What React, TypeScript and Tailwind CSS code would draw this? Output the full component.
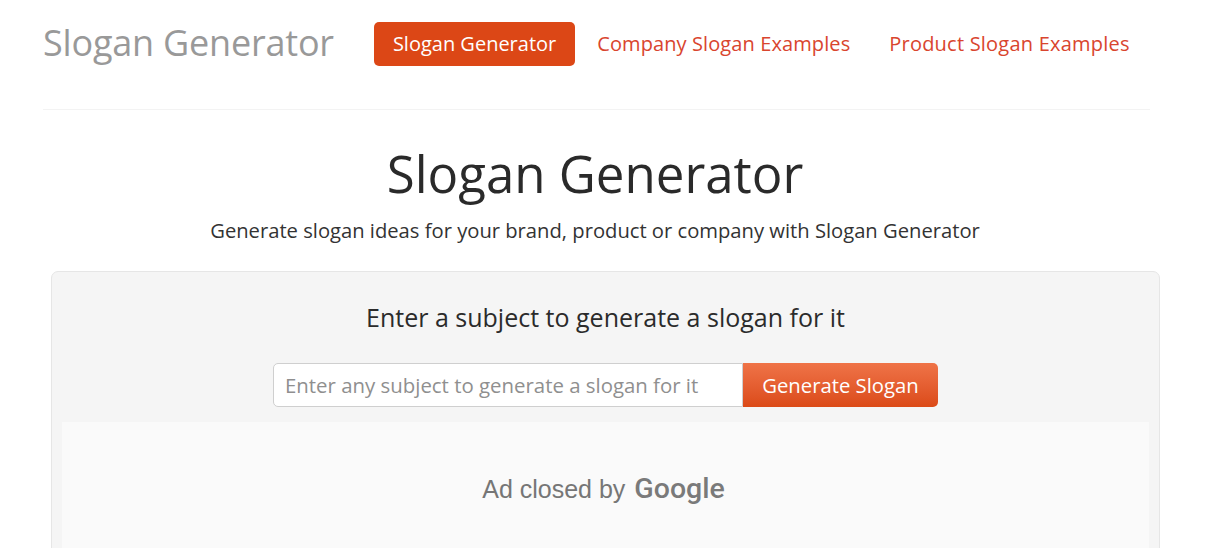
export default function App() {
  return (
    <div className="w-[1207px] h-[548px] overflow-hidden bg-white font-['Open_Sans',sans-serif] text-[#333]">
      <header className="ml-[43px] w-[1107px] h-[110px] pb-[22px] flex items-center border-b border-[#f3f3f3]">
        <a className="text-[36px] text-[#999] tracking-[-0.2px] leading-none pb-[2px]">Slogan Generator</a>
        <nav className="ml-[40px] flex items-center text-[20px] leading-none">
          <a className="h-[44px] px-[19px] flex items-center rounded-[5px] bg-[#dc4716] text-white">
            Slogan Generator
          </a>
          <a className="ml-[22px] text-[#d9452e] tracking-[0.1px]">Company Slogan Examples</a>
          <a className="ml-[39px] text-[#d9452e] tracking-[0.22px]">Product Slogan Examples</a>
        </nav>
      </header>

      <section className="w-[1207px] pr-[21px] pl-[4px] text-center">
        <h1 className="mt-[35px] text-[51px] leading-[56px] font-medium text-[#2a2a2a]">Slogan Generator</h1>
        <p className="mt-[17px] text-[20.2px] leading-[24px] text-[#333]">
          Generate slogan ideas for your brand, product or company with Slogan Generator
        </p>
      </section>

      <div className="ml-[51px] mt-[29px] w-[1109px] h-[300px] rounded-t-[7px] border border-[#e6e6e6] bg-[#f5f5f5] px-[10px]">
        <h2 className="mt-[29px] text-center text-[25px] leading-[32px] font-medium text-[#2b2b2b]">
          Enter a subject to generate a slogan for it
        </h2>
        <form className="mt-[30px] flex justify-center" onSubmit={(e) => e.preventDefault()}>
          <input
            type="text"
            placeholder="Enter any subject to generate a slogan for it"
            className="w-[470px] h-[44px] rounded-l-[5px] border border-[#cfcfcf] bg-white px-[11px] text-[20.4px] text-[#555] placeholder:text-[#8f8f8f] outline-none"
          />
          <button
            type="submit"
            className="w-[195px] h-[44px] rounded-r-[5px] bg-gradient-to-b from-[#ef7347] to-[#db4a17] text-[20.3px] text-white"
          >
            Generate Slogan
          </button>
        </form>
        <div className="mt-[15px] h-[200px] bg-[#fafafa] flex justify-center">
          <div className="mt-[46px] pr-[4px] flex items-baseline gap-[9px] text-[#767676] font-['Liberation_Sans',Arial,sans-serif]">
            <span className="text-[25px]">Ad closed by</span>
            <span className="text-[28.5px] font-medium font-['Roboto',sans-serif] text-[#7a7a7a]">Google</span>
          </div>
        </div>
      </div>
    </div>
  );
}
